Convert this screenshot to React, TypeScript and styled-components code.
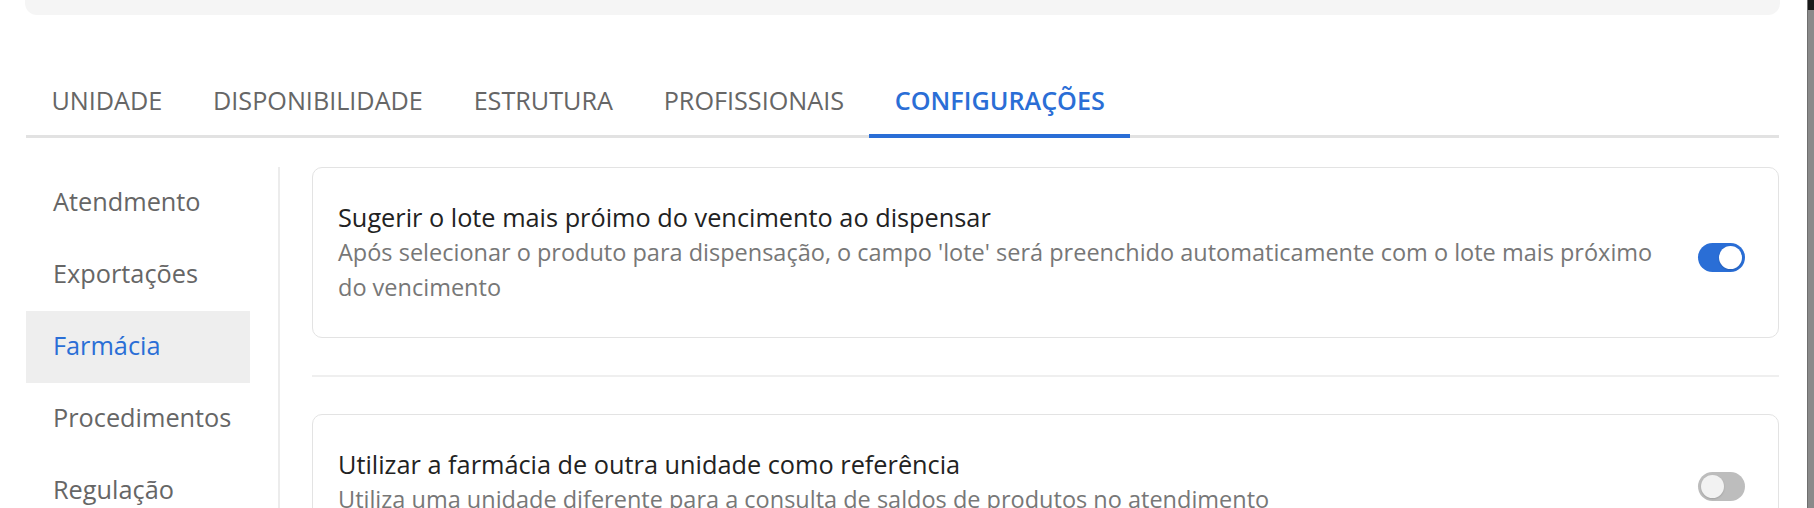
import React, { useState } from 'react';
import styled, { createGlobalStyle } from 'styled-components';

const GlobalStyle = createGlobalStyle`
  html, body {
    margin: 0;
    padding: 0;
    background: #fff;
  }
  body {
    font-family: "Open Sans", "Noto Sans", "Liberation Sans", sans-serif;
    -webkit-font-smoothing: antialiased;
  }
  * {
    box-sizing: border-box;
  }
`;

const Page = styled.div`
  display: flex;
  width: 1814px;
  height: 508px;
  overflow: hidden;
`;
const Main = styled.div`
  flex: 1;
  display: flex;
  flex-direction: column;
  padding: 0 28px 0 26px;
  min-width: 0;
`;
const ScrollStrip = styled.div`
  width: 7px;
  background: linear-gradient(#1a1a1a 0, #1a1a1a 10px, #8a8a8a 10px);
  border-left: 1px solid #6e6e6e;
`;
const TopPanel = styled.div`
  height: 15px;
  margin: 0 -1px;
  background: #f5f5f5;
  border-radius: 0 0 12px 12px;
`;
const TabBar = styled.nav`
  display: flex;
  margin-top: 55px;
  border-bottom: 3px solid #e2e2e2;
`;
const Tab = styled.button<{ $active?: boolean }>`
  height: 68px;
  padding: 0 25.4px 4px;
  margin-bottom: -3px;
  border: none;
  border-bottom: 4px solid ${(p) => (p.$active ? '#2a6ed6' : 'transparent')};
  background: none;
  font-family: inherit;
  font-size: 25.2px;
  font-weight: ${(p) => (p.$active ? 600 : 400)};
  color: ${(p) => (p.$active ? '#2a6ed6' : '#666')};
  text-transform: uppercase;
  cursor: pointer;
`;
const Body = styled.div`
  flex: 1;
  display: flex;
  padding-top: 29px;
  min-height: 0;
`;
const SideMenu = styled.ul`
  list-style: none;
  margin: 0;
  padding: 0;
  width: 224px;
  flex-shrink: 0;
`;
const SideItem = styled.li<{ $active?: boolean }>`
  height: 72px;
  display: flex;
  align-items: center;
  padding: 0 0 5px 27px;
  font-size: 25.3px;
  color: ${(p) => (p.$active ? '#2a6ed6' : '#666')};
  background: ${(p) => (p.$active ? '#eeeeee' : 'transparent')};
  cursor: pointer;
`;
const VDivider = styled.div`
  width: 2px;
  background: #ececec;
  margin: 0 32px 0 28px;
  flex-shrink: 0;
`;
const Content = styled.div`
  flex: 1;
  display: flex;
  flex-direction: column;
  min-width: 0;
`;
const Card = styled.div`
  display: flex;
  align-items: center;
  gap: 24px;
  padding: 32px 33px 32px 25px;
  border: 1px solid #e3e3e3;
  border-radius: 10px;
  flex-shrink: 0;
`;
const TextBlock = styled.div`
  flex: 1;
  min-width: 0;
`;
const Title = styled.div`
  font-size: 25.3px;
  line-height: 35px;
  color: #222;
`;
const Description = styled.div`
  font-size: 23.5px;
  line-height: 35px;
  color: #777;
`;
const HDivider = styled.hr`
  border: none;
  height: 2px;
  background: #efefef;
  margin: 37px 0;
  flex-shrink: 0;
`;
const Track = styled.button<{ $on: boolean }>`
  width: 47px;
  height: 29px;
  margin-top: 9px;
  flex-shrink: 0;
  border: none;
  border-radius: 15px;
  padding: 3px;
  display: flex;
  align-items: center;
  justify-content: ${(p) => (p.$on ? 'flex-end' : 'flex-start')};
  background: ${(p) => (p.$on ? '#2a6ed6' : '#bdbdbd')};
  cursor: pointer;
`;
const Knob = styled.span<{ $on: boolean }>`
  width: 23px;
  height: 23px;
  border-radius: 50%;
  background: ${(p) => (p.$on ? '#fff' : '#f2f2f2')};
  box-shadow: 0 1px 2px rgba(0, 0, 0, 0.15);
`;

const tabs = ['Unidade', 'Disponibilidade', 'Estrutura', 'Profissionais', 'Configurações'];
const menu = ['Atendmento', 'Exportações', 'Farmácia', 'Procedimentos', 'Regulação'];

interface Setting {
  title: string;
  description: string;
  on: boolean;
}

const settings: Setting[] = [
  {
    title: 'Sugerir o lote mais próimo do vencimento ao dispensar',
    description:
      "Após selecionar o produto para dispensação, o campo 'lote' será preenchido automaticamente com o lote mais próximo do vencimento",
    on: true,
  },
  {
    title: 'Utilizar a farmácia de outra unidade como referência',
    description: 'Utiliza uma unidade diferente para a consulta de saldos de produtos no atendimento',
    on: false,
  },
];

const Toggle = ({ on, onClick }: { on: boolean; onClick: () => void }) => (
  <Track $on={on} onClick={onClick} aria-pressed={on}>
    <Knob $on={on} />
  </Track>
);

const App = () => {
  const [activeTab, setActiveTab] = useState(4);
  const [activeMenu, setActiveMenu] = useState(2);
  const [values, setValues] = useState(settings.map((s) => s.on));

  const flip = (idx: number) => {
    const next = [...values];
    next[idx] = !next[idx];
    setValues(next);
  };

  return (
    <>
      <GlobalStyle />
      <Page>
        <Main>
          <TopPanel />
          <TabBar>
            {tabs.map((t, idx) => (
              <Tab key={t} $active={idx === activeTab} onClick={() => setActiveTab(idx)}>
                {t}
              </Tab>
            ))}
          </TabBar>
          <Body>
            <SideMenu>
              {menu.map((m, idx) => (
                <SideItem key={m} $active={idx === activeMenu} onClick={() => setActiveMenu(idx)}>
                  {m}
                </SideItem>
              ))}
            </SideMenu>
            <VDivider />
            <Content>
              {settings.map((s, idx) => (
                <React.Fragment key={s.title}>
                  {idx > 0 && <HDivider />}
                  <Card>
                    <TextBlock>
                      <Title>{s.title}</Title>
                      <Description>{s.description}</Description>
                    </TextBlock>
                    <Toggle on={values[idx]} onClick={() => flip(idx)} />
                  </Card>
                </React.Fragment>
              ))}
            </Content>
          </Body>
        </Main>
        <ScrollStrip />
      </Page>
    </>
  );
};

export default App;
